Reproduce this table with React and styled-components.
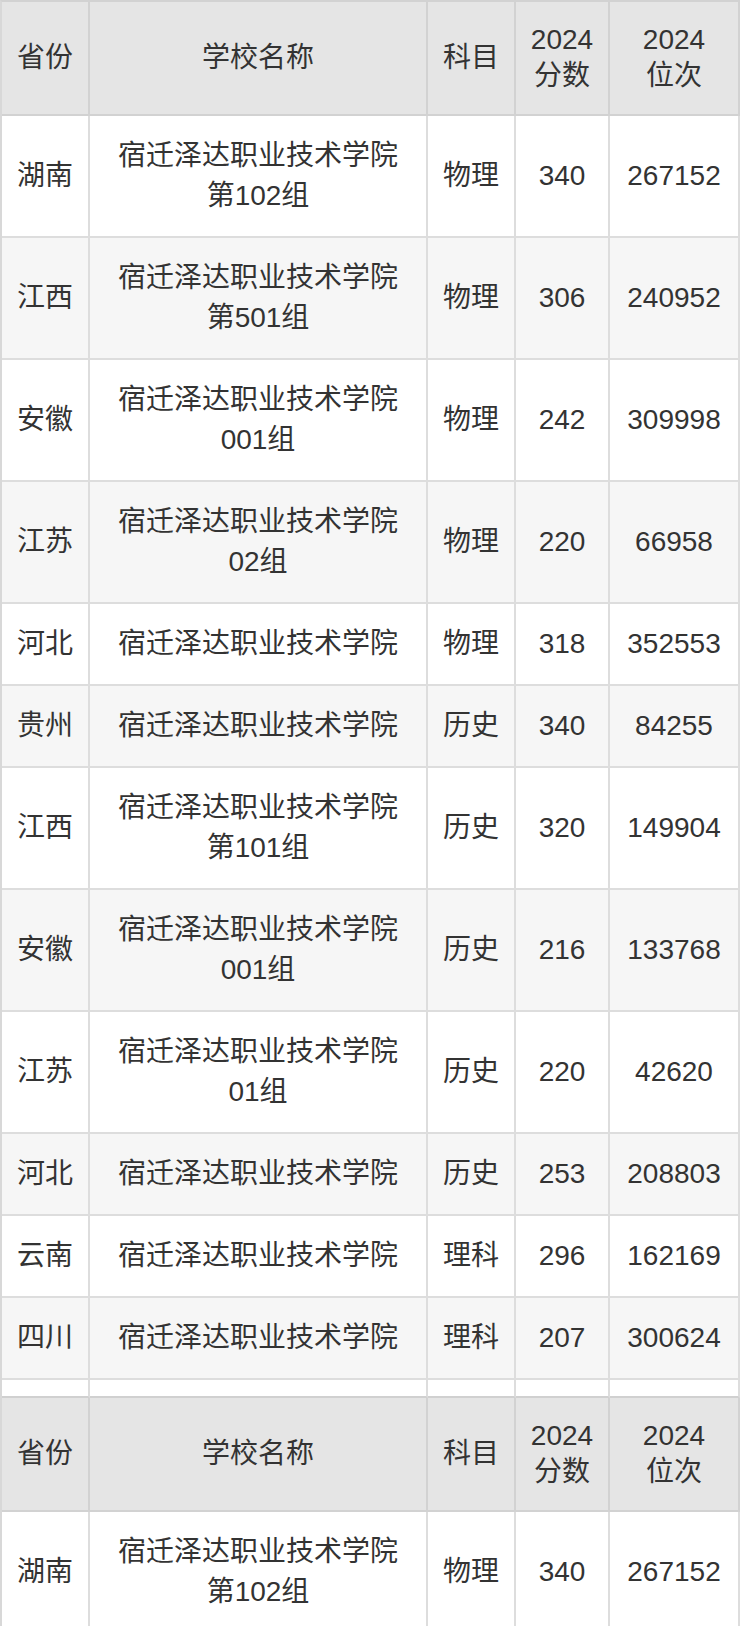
import React from "react";
import styled, { createGlobalStyle } from "styled-components";

const GlobalStyle = createGlobalStyle`
  html, body {
    margin: 0;
    padding: 0;
    background: #ffffff;
  }
  body {
    font-family: "Liberation Sans", Arial, "Noto Sans CJK SC", sans-serif;
    color: #333333;
  }
`;

const Table = styled.table`
  width: 740px;
  table-layout: fixed;
  border-collapse: separate;
  border-spacing: 0;
  border-top: 2px solid #d2d2d2;
  border-left: 2px solid #d8d8d8;
  font-size: 28px;
  color: #333333;
`;

const Col = styled.col`
  width: ${(p) => p.$w}px;
`;

const HeadCell = styled.th`
  background: #e5e5e5;
  font-weight: normal;
  line-height: 36px;
  padding: 20px 4px;
  text-align: center;
  vertical-align: middle;
  border-right: 2px solid #d2d2d2;
  border-bottom: 2px solid #d2d2d2;
`;

const Row = styled.tr`
  background: ${(p) => (p.$striped ? "#f6f6f6" : "#ffffff")};
`;

const Cell = styled.td`
  line-height: 40px;
  padding: 20px 4px;
  text-align: center;
  vertical-align: middle;
  white-space: nowrap;
  border-right: 2px solid #dddddd;
  border-bottom: 2px solid #dddddd;
`;

const SpacerCell = styled.td`
  height: 16px;
  padding: 0;
  border-right: 2px solid #dddddd;
  border-bottom: 2px solid #d0d0d0;
  background: #ffffff;
`;

const SCHOOL = "宿迁泽达职业技术学院";

const rows = [
  ["湖南", "第102组", "物理", "340", "267152"],
  ["江西", "第501组", "物理", "306", "240952"],
  ["安徽", "001组", "物理", "242", "309998"],
  ["江苏", "02组", "物理", "220", "66958"],
  ["河北", "", "物理", "318", "352553"],
  ["贵州", "", "历史", "340", "84255"],
  ["江西", "第101组", "历史", "320", "149904"],
  ["安徽", "001组", "历史", "216", "133768"],
  ["江苏", "01组", "历史", "220", "42620"],
  ["河北", "", "历史", "253", "208803"],
  ["云南", "", "理科", "296", "162169"],
  ["四川", "", "理科", "207", "300624"],
];

const widths = [88, 338, 88, 94, 130];

function Header() {
  return (
    <tr>
      <HeadCell>省份</HeadCell>
      <HeadCell>学校名称</HeadCell>
      <HeadCell>科目</HeadCell>
      <HeadCell>
        2024
        <br />
        分数
      </HeadCell>
      <HeadCell>
        2024
        <br />
        位次
      </HeadCell>
    </tr>
  );
}

function DataRow({ data, striped }) {
  const [prov, group, subj, score, rank] = data;
  return (
    <Row $striped={striped}>
      <Cell>{prov}</Cell>
      <Cell>
        {SCHOOL}
        {group && (
          <>
            <br />
            {group}
          </>
        )}
      </Cell>
      <Cell>{subj}</Cell>
      <Cell>{score}</Cell>
      <Cell>{rank}</Cell>
    </Row>
  );
}

export default function App() {
  return (
    <>
      <GlobalStyle />
      <Table>
        <colgroup>
          {widths.map((w, i) => (
            <Col key={i} $w={w} />
          ))}
        </colgroup>
        <tbody>
          <Header />
          {rows.map((r, i) => (
            <DataRow key={i} data={r} striped={i % 2 === 1} />
          ))}
          <tr>
            {widths.map((w, i) => (
              <SpacerCell key={i} />
            ))}
          </tr>
          <Header />
          <DataRow data={rows[0]} striped={false} />
        </tbody>
      </Table>
    </>
  );
}
